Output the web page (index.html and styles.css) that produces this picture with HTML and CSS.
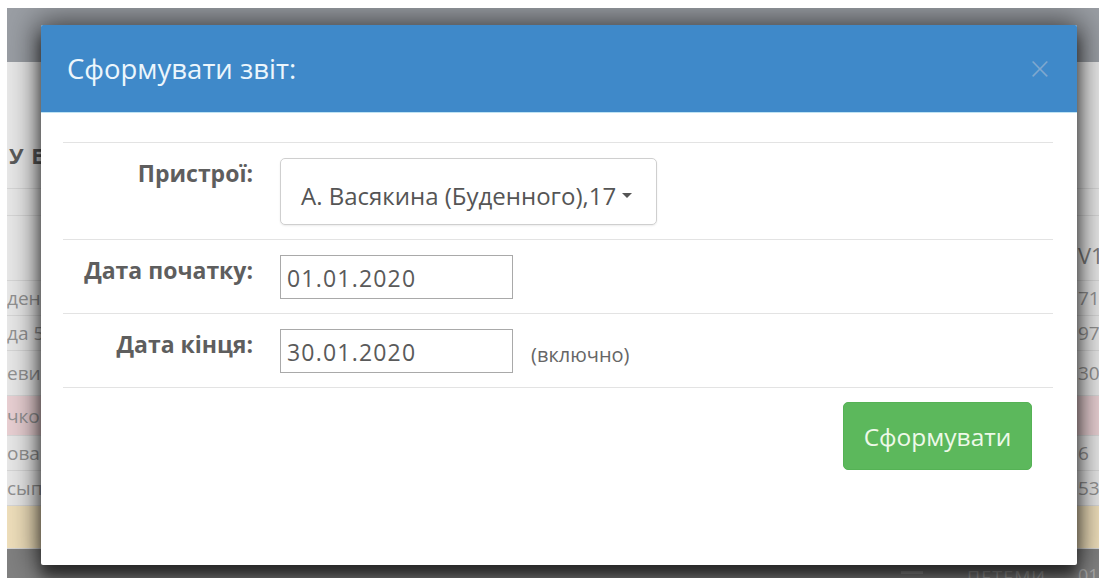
FILE: index.html
```html
<!DOCTYPE html>
<html lang="uk">
<head>
<meta charset="utf-8">
<title>Сформувати звіт</title>
<link rel="stylesheet" href="styles.css">
</head>
<body>
<div class="screen">
  <div class="topbar"></div>
  <div class="page-head">
    <h2 class="page-title">У ЕКСПЛУАТАЦІЇ</h2>
  </div>
  <div class="grid">
    <div class="tr tr-tools"><span class="td td-l"></span><span class="td td-m"></span><span class="td td-r"></span></div>
    <div class="tr tr-head"><span class="td td-l"></span><span class="td td-m"></span><span class="td td-r th">V1</span></div>
    <div class="tr tr-35"><span class="td td-l">денного</span><span class="td td-m"></span><span class="td td-r">7145</span></div>
    <div class="tr tr-35"><span class="td td-l">да 5</span><span class="td td-m"></span><span class="td td-r">977</span></div>
    <div class="tr tr-45"><span class="td td-l">евича</span><span class="td td-m"></span><span class="td td-r">303</span></div>
    <div class="tr tr-40 tr-danger"><span class="td td-l">чко</span><span class="td td-m"></span><span class="td td-r"></span></div>
    <div class="tr tr-35"><span class="td td-l">ова</span><span class="td td-m"></span><span class="td td-r td-short">6</span></div>
    <div class="tr tr-35"><span class="td td-l">сып</span><span class="td td-m"></span><span class="td td-r">535</span></div>
    <div class="tr tr-43 tr-warning"><span class="td td-l"></span><span class="td td-m"></span><span class="td td-r"></span></div>
    <div class="tr tr-foot"><span class="td td-l"></span><span class="td td-m foot-m"><span class="foot-icon"></span><span class="foot-text">ПЕТЕМИ</span></span><span class="td td-r">015</span></div>
  </div>

  <div class="modal">
    <div class="modal-header">
      <h4 class="modal-title">Сформувати звіт:</h4>
      <span class="close">×</span>
    </div>
    <div class="modal-body">
      <div class="form-row form-row-first">
        <label class="control-label">Пристрої:</label>
        <div class="controls">
          <button class="select-btn" type="button">А. Васякина (Буденного),17<span class="caret"></span></button>
        </div>
      </div>
      <div class="form-row">
        <label class="control-label">Дата початку:</label>
        <div class="controls">
          <input class="date-input" type="text" value="01.01.2020">
        </div>
      </div>
      <div class="form-row">
        <label class="control-label">Дата кінця:</label>
        <div class="controls">
          <input class="date-input" type="text" value="30.01.2020">
          <span class="hint">(включно)</span>
        </div>
      </div>
      <div class="actions">
        <button class="btn-success" type="button">Сформувати</button>
      </div>
    </div>
  </div>
</div>
</body>
</html>
```
FILE: styles.css
```css
html, body {
  margin: 0;
  padding: 0;
  background: #fff;
}

body {
  font-family: "Open Sans", "Noto Sans", sans-serif;
}

/* page behind the dialog, already dimmed by the backdrop */
.screen {
  position: relative;
  margin: 8px 0 0 7px;
  width: 1092px;
  height: 570px;
  overflow: hidden;
  background: #e8e8e8;
}

.topbar {
  height: 54px;
  background: #9a9ea4;
}

.page-head {
  height: 126px;
  box-sizing: border-box;
  padding: 80px 0 0 2px;
}

.page-title {
  margin: 0;
  font-size: 22px;
  line-height: 26px;
  font-weight: 700;
  color: #5b5b5b;
  letter-spacing: 1px;
  white-space: nowrap;
}

.grid {
  display: flex;
  flex-direction: column;
}

.tr {
  display: flex;
  border-top: 1px solid #d6d6d6;
  box-sizing: border-box;
  font-size: 19px;
  color: #929292;
}

.td {
  display: flex;
  align-items: center;
  white-space: nowrap;
  overflow: hidden;
}

.td-l {
  width: 34px;
}

.td-m {
  flex: 1;
}

.td-r {
  width: 21px;
  padding-left: 2px;
}

.td-short {
  padding-left: 10px;
}

.tr-tools { height: 27px; }
.tr-head { height: 65px; }
.tr-head .th {
  align-items: flex-end;
  padding-bottom: 10px;
  font-size: 22px;
  color: #7c7c7c;
}
.tr-35 { height: 35px; }
.tr-40 { height: 40px; }
.tr-43 { height: 43px; }
.tr-45 { height: 45px; }

.tr-danger { background: #e9d0d3; }
.tr-warning { background: #efdfbb; }

.tr-foot {
  height: 40px;
  background: #808080;
  color: #a9a9a9;
}

.foot-m {
  justify-content: flex-end;
  align-items: flex-end;
  padding-bottom: 1px;
  padding-right: 30px;
  gap: 44px;
}

.foot-icon {
  width: 22px;
  height: 7px;
  margin-bottom: 3px;
  border-top: 3px solid #9c9c9c;
  border-bottom: 3px solid #9c9c9c;
}

.foot-text {
  font-size: 18px;
  line-height: 20px;
  letter-spacing: 1px;
}

.tr-foot .td-r {
  align-items: flex-end;
  padding-bottom: 1px;
  font-size: 18px;
}

/* dialog */
.modal {
  position: absolute;
  left: 34px;
  top: 17px;
  width: 1036px;
  height: 540px;
  background: #fff;
  border-radius: 2px;
  box-shadow: 0 0 30px 4px rgba(0, 0, 0, 0.6), 0 12px 14px rgba(0, 0, 0, 0.5);
  overflow: hidden;
}

.modal-header {
  height: 88px;
  box-sizing: border-box;
  padding: 0 27px 0 26px;
  display: flex;
  align-items: center;
  justify-content: space-between;
  background: #3f89c9;
  border-bottom: 1px solid #bfe3f3;
}

.modal-title {
  margin: 0;
  font-size: 27.5px;
  font-weight: 400;
  color: #ecf6fc;
}

.close {
  font-size: 36px;
  line-height: 1;
  color: #7fa8cf;
  font-weight: 300;
}

.modal-body {
  padding: 29px 24px 0 22px;
}

.form-row {
  display: grid;
  grid-template-columns: 190px 1fr;
  column-gap: 27px;
  padding: 15px 0 14px;
  border-bottom: 1px solid #e3e3e3;
}

.form-row-first {
  border-top: 1px solid #e3e3e3;
}

.control-label {
  text-align: right;
  font-size: 23px;
  line-height: 30px;
  font-weight: 700;
  color: #5e5e5e;
}

.controls {
  display: flex;
  align-items: center;
}

.select-btn {
  width: 377px;
  height: 67px;
  box-sizing: border-box;
  padding: 8px 0 0 20px;
  display: flex;
  align-items: center;
  background: #fff;
  border: 1px solid #cfcfcf;
  border-radius: 5px;
  box-shadow: 0 1px 2px rgba(0, 0, 0, 0.08);
  font-family: inherit;
  font-size: 24px;
  color: #555;
  white-space: nowrap;
}

.caret {
  margin-left: 6px;
  width: 0;
  height: 0;
  border-top: 5px solid #555;
  border-left: 5px solid transparent;
  border-right: 5px solid transparent;
}

.date-input {
  width: 233px;
  height: 44px;
  box-sizing: border-box;
  margin: 0;
  padding: 2px 0 0 6px;
  border: 1px solid #a9a9a9;
  border-radius: 0;
  font-family: inherit;
  font-size: 23px;
  letter-spacing: 1.2px;
  color: #5a5a5a;
  background: #fff;
}

.hint {
  margin-left: 18px;
  margin-top: 6px;
  font-size: 20px;
  color: #666;
}

.actions {
  display: flex;
  justify-content: flex-end;
  padding: 14px 21px 0 0;
}

.btn-success {
  width: 189px;
  height: 68px;
  border: 1px solid #55b255;
  border-radius: 5px;
  background: #5cb85c;
  font-family: inherit;
  font-size: 24.5px;
  color: #eef9e9;
}
```
